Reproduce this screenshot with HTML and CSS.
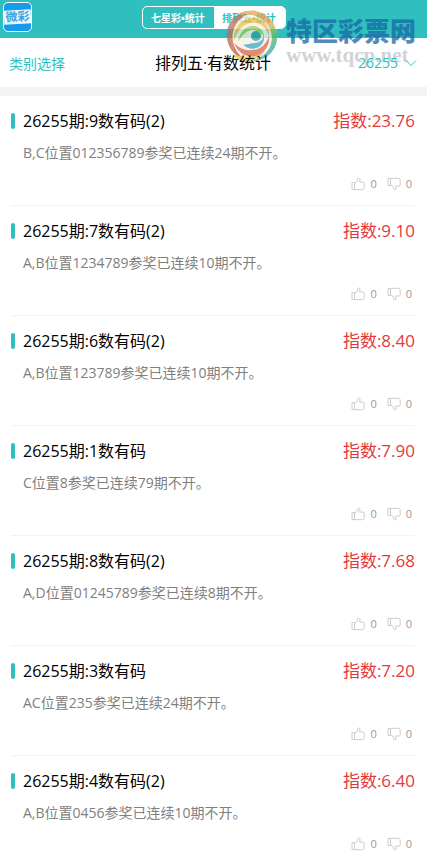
FILE: index.html
```html
<!DOCTYPE html>
<html lang="zh-CN">
<head>
<meta charset="utf-8">
<meta name="viewport" content="width=device-width, initial-scale=1">
<title>排列五·有数统计</title>
<link rel="stylesheet" href="styles.css">
</head>
<body>
<svg class="defs" aria-hidden="true">
  <symbol id="up" viewBox="0 0 14 14"><path d="M1 5.500h2.500v7H1zM3.500 6.500 6 4.500 7 1.500Q7.300.5 8.300 1q1 .6.700 2L8.500 5h3.500q1.500 0 1.300 1.500l-.3 5q-.2 1.200-1.500 1.200H3.500"/></symbol>
  <symbol id="down" viewBox="0 0 14 14"><path d="M1 1.500h2.500v7H1zM3.500 7.500 6 9.500l1 3q.3 1 1.300.5 1-.6.700-2L8.500 9h3.500q1.500 0 1.300-1.500l-.3-5q-.2-1.200-1.500-1.200H3.500"/></symbol>
</svg>
<header class="top">
  <a class="logo" href="#" aria-label="微彩"><span>微彩</span></a>
  <nav class="tabs">
    <button type="button">七星彩•统计</button>
    <button type="button" class="active">排列五•统计</button>
  </nav>
</header>
<div class="bar">
  <a class="pick" href="#">类别选择</a>
  <h1>排列五·有数统计</h1>
  <button type="button" class="issue">26255
    <svg viewBox="0 0 12 8" aria-hidden="true"><path d="M1 1.500 6 6.500 11 1.500"/></svg>
  </button>
</div>
<main class="list" id="list"></main>
<div class="mark" aria-hidden="true">
  <svg viewBox="0 0 56 56">
    <defs>
      <linearGradient id="warm" x1="0" y1="0" x2="1" y2="1"><stop offset="0" stop-color="#a58468"/><stop offset=".5" stop-color="#c4604c"/><stop offset="1" stop-color="#b5483c"/></linearGradient>
      <linearGradient id="cool" x1="0" y1="0" x2="0" y2="1"><stop offset="0" stop-color="#a9cf4a"/><stop offset=".5" stop-color="#3fae7c"/><stop offset="1" stop-color="#3f9fd0"/></linearGradient>
    </defs>
    <circle cx="28" cy="28" r="25" fill="#f6f1e4"/>
    <path d="M32 3C12 0 1 16 3 31c2 11 9 18 18 21C11 44 7 34 9 24 12 12 21 6 32 3z" fill="url(#warm)"/>
    <path d="M14 7C23 0 39 2 47 12c8 10 7 24-1 32 3-11 3-21-4-29C35 7 25 5 14 7z" fill="#e8a24a"/>
    <path d="M53 25c2 15-9 28-25 28 10-3 17-9 19-17 2-7 1-14-2-20 5 2 7 5 8 9z" fill="url(#cool)"/>
    <path d="M8 46c13 5 27 3 34-7-3 11-11 15-22 15-5-1-9-4-12-8z" fill="#e3c33b"/>
    <path d="M10 33c-1-12 7-23 19-23 10 0 17 8 16 18-3-9-9-14-17-13-9 0-15 8-18 18z" fill="#e9bb3f"/>
    <path d="M10 35c5 12 16 17 26 11 7-4 10-11 9-18-3 9-9 14-17 14-7 1-13-2-18-7z" fill="#d9624a"/>
    <path d="M14 34c1-10 8-17 16-16 6 1 10 5 10 11-3-5-7-7-12-7-6 1-10 5-14 12z" fill="#9cc850"/>
    <path d="M19 37c6 5 15 5 19-1 2-2 2-5 2-8-2 5-6 7-10 7-4 1-8 1-11 2z" fill="#3aa5c2"/>
    <circle cx="32" cy="28" r="5" fill="#2c9a94"/>
  </svg>
  <div class="mark-text"><b>特区彩票网</b><i>www.tqcp.net</i></div>
</div>
<script src="script.js"></script>
</body>
</html>
```
FILE: styles.css
```css
* { box-sizing: border-box; }
body { margin: 0; position: relative; background: #fff; color: #000; font-family: "Open Sans", "Noto Sans CJK SC", sans-serif; }
button { font: inherit; border: 0; padding: 0; background: none; cursor: pointer; }
a { text-decoration: none; }
.defs { display: none; }
.top { display: flex; justify-content: center; align-items: center; height: 38px; background: #30bfbf; padding-bottom: 3px; position: relative; }
.logo { position: absolute; left: 3px; top: 2px; width: 29px; height: 30px; border: 1px solid #fff; border-radius: 5px; background: #159be9; overflow: hidden; display: flex; align-items: center; }
.logo span { flex: 1; height: 14px; line-height: 14px; background: #eef8ff; color: #3d9fe0; font-size: 12px; font-weight: 700; text-align: center; transform: rotate(-3deg); white-space: nowrap; }
.tabs { display: flex; width: 144px; height: 23px; border: 1px solid #fff; border-radius: 5px; overflow: hidden; }
.tabs button { flex: 1; color: #fff; font-size: 10px; font-weight: 700; line-height: 20px; white-space: nowrap; }
.tabs .active { background: #fff; color: #30bfbf; }
.bar { display: grid; grid-template-columns: 1fr auto 1fr; align-items: center; height: 58px; padding: 0 10px 0 9px; border-bottom: 9px solid #f4f4f4; }
.pick, .issue { color: #30bfbf; font-size: 14px; }
h1 { margin: 0; font-size: 16px; font-weight: 400; line-height: 24px; }
.bar .issue, .bar h1 { position: relative; z-index: 1; }
.issue { justify-self: end; display: flex; align-items: center; gap: 7px; }
.issue svg { width: 12px; height: 8px; fill: none; stroke: #30bfbf; }
.list { padding: 0 12px 0 11px; }
.item { height: 110px; padding-top: 13px; border-bottom: 1px solid #f3f3f3; }
.item:last-child { border-bottom: 0; }
.head { display: flex; align-items: center; height: 24px; }
.head::before { content: ""; width: 4px; height: 16px; border-radius: 2px; background: #30bfbf; margin-right: 8px; }
h2 { flex: 1; margin: 0; font-size: 16px; font-weight: 400; line-height: 24px; }
.score { color: #e4393c; font-size: 17px; line-height: 24px; }
.item p { margin: 10px 0 0 12px; color: #808080; font-size: 14px; line-height: 20px; }
.votes { display: flex; justify-content: flex-end; gap: 10px; margin: 13px 3px 0 0; }
.votes button { display: flex; align-items: center; gap: 5px; color: #999; font-size: 11px; line-height: 16px; }
.votes svg { width: 14px; height: 14px; fill: none; stroke: #ccc; }
.mark { position: absolute; top: 8px; left: 224px; display: flex; pointer-events: none; opacity: .75; }
.mark svg { width: 56px; height: 56px; }
.mark-text { padding: 7px 0 0 6px; }
.mark b, .mark i { display: block; font-style: normal; white-space: nowrap; }
.mark b { color: #1767a5; font: 900 26px/30px "Noto Sans CJK SC", sans-serif; }
.mark i { color: #c4c4c8; font: 700 21px/20px "Liberation Serif", serif; }
```
FILE: script.js
```js
const rows = [
  ["9数有码(2)", "23.76", "B,C位置012356789参奖已连续24期不开。"],
  ["7数有码(2)", "9.10", "A,B位置1234789参奖已连续10期不开。"],
  ["6数有码(2)", "8.40", "A,B位置123789参奖已连续10期不开。"],
  ["1数有码", "7.90", "C位置8参奖已连续79期不开。"],
  ["8数有码(2)", "7.68", "A,D位置01245789参奖已连续8期不开。"],
  ["3数有码", "7.20", "AC位置235参奖已连续24期不开。"],
  ["4数有码(2)", "6.40", "A,B位置0456参奖已连续10期不开。"]
];
const vote = (id, label) =>
  `<button type="button" aria-label="${label}"><svg aria-hidden="true"><use href="#${id}"/></svg>0</button>`;
document.getElementById("list").innerHTML = rows.map(([title, score, text]) => `
  <article class="item">
    <div class="head"><h2>26255期:${title}</h2><span class="score">指数:${score}</span></div>
    <p>${text}</p>
    <div class="votes">${vote("up", "赞")}${vote("down", "踩")}</div>
  </article>`).join("");
```
